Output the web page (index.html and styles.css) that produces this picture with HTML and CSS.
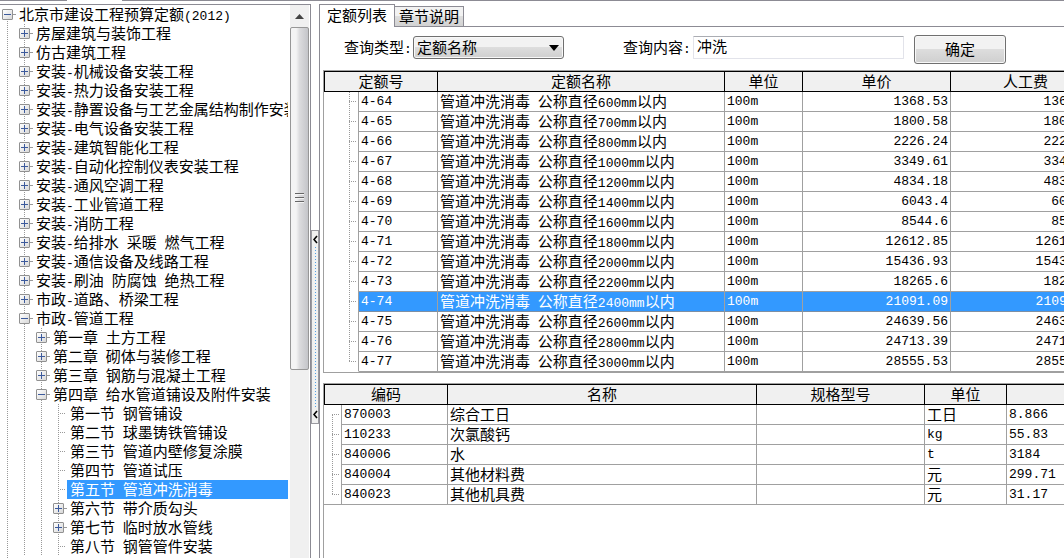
FILE: index.html
```html
<!DOCTYPE html>
<html lang="zh-CN">
<head>
<meta charset="utf-8">
<title>定额查询</title>
<link rel="stylesheet" href="styles.css">
</head>
<body>
<div class="topline"><span class="topline-gap"></span></div>
<div class="app">
  <nav class="side" aria-label="定额目录">
    <div class="tree-view">
      <ul class="tree root">
        <li><div class="node"><button class="toggle open" aria-label="折叠"></button><span class="label">北京市建设工程预算定额<span class="n">(2012)</span></span></div>
          <ul class="tree">
            <li><div class="node"><button class="toggle" aria-label="展开"></button><span class="label">房屋建筑与装饰工程</span></div></li>
            <li><div class="node"><button class="toggle" aria-label="展开"></button><span class="label">仿古建筑工程</span></div></li>
            <li><div class="node"><button class="toggle" aria-label="展开"></button><span class="label">安装<span class="n">-</span>机械设备安装工程</span></div></li>
            <li><div class="node"><button class="toggle" aria-label="展开"></button><span class="label">安装<span class="n">-</span>热力设备安装工程</span></div></li>
            <li><div class="node"><button class="toggle" aria-label="展开"></button><span class="label">安装<span class="n">-</span>静置设备与工艺金属结构制作安装</span></div></li>
            <li><div class="node"><button class="toggle" aria-label="展开"></button><span class="label">安装<span class="n">-</span>电气设备安装工程</span></div></li>
            <li><div class="node"><button class="toggle" aria-label="展开"></button><span class="label">安装<span class="n">-</span>建筑智能化工程</span></div></li>
            <li><div class="node"><button class="toggle" aria-label="展开"></button><span class="label">安装<span class="n">-</span>自动化控制仪表安装工程</span></div></li>
            <li><div class="node"><button class="toggle" aria-label="展开"></button><span class="label">安装<span class="n">-</span>通风空调工程</span></div></li>
            <li><div class="node"><button class="toggle" aria-label="展开"></button><span class="label">安装<span class="n">-</span>工业管道工程</span></div></li>
            <li><div class="node"><button class="toggle" aria-label="展开"></button><span class="label">安装<span class="n">-</span>消防工程</span></div></li>
            <li><div class="node"><button class="toggle" aria-label="展开"></button><span class="label">安装<span class="n">-</span>给排水<span class="n"> </span>采暖<span class="n"> </span>燃气工程</span></div></li>
            <li><div class="node"><button class="toggle" aria-label="展开"></button><span class="label">安装<span class="n">-</span>通信设备及线路工程</span></div></li>
            <li><div class="node"><button class="toggle" aria-label="展开"></button><span class="label">安装<span class="n">-</span>刷油<span class="n"> </span>防腐蚀<span class="n"> </span>绝热工程</span></div></li>
            <li><div class="node"><button class="toggle" aria-label="展开"></button><span class="label">市政<span class="n">-</span>道路、桥梁工程</span></div></li>
            <li><div class="node"><button class="toggle open" aria-label="折叠"></button><span class="label">市政<span class="n">-</span>管道工程</span></div>
              <ul class="tree">
                <li><div class="node"><button class="toggle" aria-label="展开"></button><span class="label">第一章<span class="n"> </span>土方工程</span></div></li>
                <li><div class="node"><button class="toggle" aria-label="展开"></button><span class="label">第二章<span class="n"> </span>砌体与装修工程</span></div></li>
                <li><div class="node"><button class="toggle" aria-label="展开"></button><span class="label">第三章<span class="n"> </span>钢筋与混凝土工程</span></div></li>
                <li><div class="node"><button class="toggle open" aria-label="折叠"></button><span class="label">第四章<span class="n"> </span>给水管道铺设及附件安装</span></div>
                  <ul class="tree">
                    <li><div class="node leaf"><span class="label">第一节<span class="n"> </span>钢管铺设</span></div></li>
                    <li><div class="node leaf"><span class="label">第二节<span class="n"> </span>球墨铸铁管铺设</span></div></li>
                    <li><div class="node leaf"><span class="label">第三节<span class="n"> </span>管道内壁修复涂膜</span></div></li>
                    <li><div class="node leaf"><span class="label">第四节<span class="n"> </span>管道试压</span></div></li>
                    <li><div class="node leaf selected"><span class="label">第五节<span class="n"> </span>管道冲洗消毒</span></div></li>
                    <li><div class="node"><button class="toggle" aria-label="展开"></button><span class="label">第六节<span class="n"> </span>带介质勾头</span></div></li>
                    <li><div class="node"><button class="toggle" aria-label="展开"></button><span class="label">第七节<span class="n"> </span>临时放水管线</span></div></li>
                    <li><div class="node leaf"><span class="label">第八节<span class="n"> </span>钢管管件安装</span></div></li>
                  </ul>
                </li>
              </ul>
            </li>
          </ul>
        </li>
      </ul>
    </div>
    <div class="scrollbar">
      <button class="scroll-up" aria-label="向上滚动"><svg width="9" height="5" viewBox="0 0 9 5"><path d="M0 5L4.500 0L9 5Z" fill="#444"/></svg></button>
      <div class="thumb"><span class="grip"></span></div>
    </div>
  </nav>

  <div class="splitter">
    <div class="splitter-bar">
      <svg width="5" height="9" viewBox="0 0 5 9"><path d="M4 1L1 4.500L4 8" fill="none" stroke="#000" stroke-width="1.600"/></svg>
      <span class="splitter-dots"></span>
      <svg width="5" height="9" viewBox="0 0 5 9"><path d="M4 1L1 4.500L4 8" fill="none" stroke="#000" stroke-width="1.600"/></svg>
    </div>
  </div>

  <main class="main">
    <div class="tabs" role="tablist">
      <button class="tab active" role="tab" aria-selected="true">定额列表</button>
      <button class="tab" role="tab" aria-selected="false">章节说明</button>
    </div>
    <form class="query">
      <label class="query-label" for="qtype">查询类型<span class="n">:</span></label>
      <div class="select-wrap">
        <select id="qtype" class="select"><option>定额名称</option></select>
        <svg class="select-arrow" width="10" height="6" viewBox="0 0 10 6"><path d="M0 0H10L5 6Z" fill="#000"/></svg>
      </div>
      <label class="query-label second" for="qtext">查询内容<span class="n">:</span></label>
      <input id="qtext" class="text" type="text" value="冲洗">
      <button class="ok" type="button">确定</button>
    </form>

    <div class="grid">
      <table class="quota">
        <colgroup><col class="q-guide"><col class="q-code"><col class="q-name"><col class="q-unit"><col class="q-price"><col class="q-labor"></colgroup>
        <thead><tr><th colspan="2">定额号</th><th>定额名称</th><th>单位</th><th>单价</th><th>人工费</th></tr></thead>
        <tbody>
          <tr><td class="guide"></td><td class="n">4-64</td><td>管道冲洗消毒<span class="n"> </span>公称直径<span class="n">600mm</span>以内</td><td class="n">100m</td><td class="n num">1368.53</td><td class="n num">1368.53</td></tr>
          <tr><td class="guide"></td><td class="n">4-65</td><td>管道冲洗消毒<span class="n"> </span>公称直径<span class="n">700mm</span>以内</td><td class="n">100m</td><td class="n num">1800.58</td><td class="n num">1800.58</td></tr>
          <tr><td class="guide"></td><td class="n">4-66</td><td>管道冲洗消毒<span class="n"> </span>公称直径<span class="n">800mm</span>以内</td><td class="n">100m</td><td class="n num">2226.24</td><td class="n num">2226.24</td></tr>
          <tr><td class="guide"></td><td class="n">4-67</td><td>管道冲洗消毒<span class="n"> </span>公称直径<span class="n">1000mm</span>以内</td><td class="n">100m</td><td class="n num">3349.61</td><td class="n num">3349.61</td></tr>
          <tr><td class="guide"></td><td class="n">4-68</td><td>管道冲洗消毒<span class="n"> </span>公称直径<span class="n">1200mm</span>以内</td><td class="n">100m</td><td class="n num">4834.18</td><td class="n num">4834.18</td></tr>
          <tr><td class="guide"></td><td class="n">4-69</td><td>管道冲洗消毒<span class="n"> </span>公称直径<span class="n">1400mm</span>以内</td><td class="n">100m</td><td class="n num">6043.4</td><td class="n num">6043.4</td></tr>
          <tr><td class="guide"></td><td class="n">4-70</td><td>管道冲洗消毒<span class="n"> </span>公称直径<span class="n">1600mm</span>以内</td><td class="n">100m</td><td class="n num">8544.6</td><td class="n num">8544.6</td></tr>
          <tr><td class="guide"></td><td class="n">4-71</td><td>管道冲洗消毒<span class="n"> </span>公称直径<span class="n">1800mm</span>以内</td><td class="n">100m</td><td class="n num">12612.85</td><td class="n num">12612.85</td></tr>
          <tr><td class="guide"></td><td class="n">4-72</td><td>管道冲洗消毒<span class="n"> </span>公称直径<span class="n">2000mm</span>以内</td><td class="n">100m</td><td class="n num">15436.93</td><td class="n num">15436.93</td></tr>
          <tr><td class="guide"></td><td class="n">4-73</td><td>管道冲洗消毒<span class="n"> </span>公称直径<span class="n">2200mm</span>以内</td><td class="n">100m</td><td class="n num">18265.6</td><td class="n num">18265.6</td></tr>
          <tr class="selected"><td class="guide"></td><td class="n">4-74</td><td>管道冲洗消毒<span class="n"> </span>公称直径<span class="n">2400mm</span>以内</td><td class="n">100m</td><td class="n num">21091.09</td><td class="n num">21091.09</td></tr>
          <tr><td class="guide"></td><td class="n">4-75</td><td>管道冲洗消毒<span class="n"> </span>公称直径<span class="n">2600mm</span>以内</td><td class="n">100m</td><td class="n num">24639.56</td><td class="n num">24639.56</td></tr>
          <tr><td class="guide"></td><td class="n">4-76</td><td>管道冲洗消毒<span class="n"> </span>公称直径<span class="n">2800mm</span>以内</td><td class="n">100m</td><td class="n num">24713.39</td><td class="n num">24713.39</td></tr>
          <tr><td class="guide"></td><td class="n">4-77</td><td>管道冲洗消毒<span class="n"> </span>公称直径<span class="n">3000mm</span>以内</td><td class="n">100m</td><td class="n num">28555.53</td><td class="n num">28555.53</td></tr>
        </tbody>
      </table>
    </div>

    <div class="grid grow">
      <table class="parts">
        <colgroup><col class="p-guide"><col class="p-code"><col class="p-name"><col class="p-spec"><col class="p-unit"><col class="p-amount"></colgroup>
        <thead><tr><th colspan="2">编码</th><th>名称</th><th>规格型号</th><th>单位</th><th></th></tr></thead>
        <tbody>
          <tr><td class="guide"></td><td class="n">870003</td><td>综合工日</td><td></td><td>工日</td><td class="n">8.866</td></tr>
          <tr><td class="guide"></td><td class="n">110233</td><td>次氯酸钙</td><td></td><td class="n">kg</td><td class="n">55.83</td></tr>
          <tr><td class="guide"></td><td class="n">840006</td><td>水</td><td></td><td class="n">t</td><td class="n">3184</td></tr>
          <tr><td class="guide"></td><td class="n">840004</td><td>其他材料费</td><td></td><td>元</td><td class="n">299.71</td></tr>
          <tr><td class="guide"></td><td class="n">840023</td><td>其他机具费</td><td></td><td>元</td><td class="n">31.17</td></tr>
        </tbody>
      </table>
    </div>
  </main>
</div>
</body>
</html>
```
FILE: styles.css
```css
* { box-sizing: border-box; }

body {
  margin: 0;
  height: 100vh;
  overflow: hidden;
  display: flex;
  flex-direction: column;
  background: #fff;
  color: #000;
  font: 15px/19px "Noto Sans CJK SC", sans-serif;
}

button, input, select {
  margin: 0;
  font: inherit;
  color: inherit;
}

/* Latin letters, digits and spaces take about half a CJK cell */
.n {
  font-family: "Liberation Mono", monospace;
  font-size: 13px;
  white-space: pre;
}
span.n { line-height: 0; }

.topline {
  flex: none;
  height: 4px;
  border-top: 1px solid #8c8b94;
  padding-left: 67px;
}
.topline-gap {
  display: block;
  width: 55px;
  height: 1px;
  margin-top: -1px;
  background: #fff;
}

.app {
  flex: 1;
  min-height: 0;
  display: flex;
}

/* Catalogue tree */
.side {
  flex: 0 0 311px;
  min-width: 0;
  display: flex;
  gap: 2px;
  border: solid #8c8b94;
  border-width: 1px 1px 0 0;
  padding-right: 1px;
}
.tree-view {
  flex: 1;
  min-width: 0;
  overflow: hidden;
}
.tree {
  list-style: none;
  margin: 0 0 0 17px;
  padding: 0;
  background: repeating-linear-gradient(#999 0 1px, transparent 1px 2px) 7px 0 / 1px 100% no-repeat;
}
.tree.root {
  margin: 0;
  min-height: 100%;
  background-position: 7px 12px;
}
.node {
  display: flex;
  align-items: center;
  height: 19px;
  padding-left: 2px;
  white-space: nowrap;
}
.toggle {
  flex: none;
  width: 11px;
  height: 11px;
  padding: 0;
  border: 1px solid #919191;
  border-radius: 1px;
  background:
    linear-gradient(#3c5a9c, #3c5a9c) center / 7px 1px no-repeat,
    linear-gradient(#3c5a9c, #3c5a9c) center / 1px 7px no-repeat,
    linear-gradient(135deg, #fff, #d8d8d8);
}
.toggle.open {
  background:
    linear-gradient(#3c5a9c, #3c5a9c) center / 7px 1px no-repeat,
    linear-gradient(135deg, #fff, #d8d8d8);
}
.node::before {
  content: "";
  order: 1;
  flex: none;
  width: 2px;
  border-top: 1px dotted #999;
}
.node .label {
  order: 2;
  flex: 1;
  min-width: 0;
  margin-left: 1px;
  padding: 0 0 2px 3px;
  line-height: 17px;
}
.node.leaf { padding-left: 8px; }
.node.leaf::before {
  width: 7px;
  height: 1px;
  border: 0;
  background: repeating-linear-gradient(90deg, transparent 0 1px, #999 1px 2px);
}
.node.selected .label {
  background: #3399ff;
  color: #fff;
}

.scrollbar {
  flex: 0 0 19px;
  display: flex;
  flex-direction: column;
  background: #f0f0f0;
}
.scroll-up {
  flex: none;
  display: flex;
  align-items: center;
  justify-content: center;
  height: 22px;
  padding: 0;
  border: 0;
  background: none;
}
.thumb {
  flex: 0 0 auto;
  height: 62%;
  display: flex;
  align-items: center;
  justify-content: center;
  border: 1px solid #979797;
  border-radius: 2px;
  background: linear-gradient(90deg, #f4f4f4 0 30%, #dcdcde 50%, #c4c5c9);
}
.grip {
  width: 9px;
  height: 10px;
  background: repeating-linear-gradient(#666 0 1px, #f4f4f4 1px 2px, transparent 2px 4px);
}

/* Splitter between the tree and the grids */
.splitter {
  flex: 0 0 8px;
  padding-top: 226px;
}
.splitter-bar {
  height: 194px;
  display: flex;
  flex-direction: column;
  align-items: center;
  gap: 3px;
  padding: 4px 0;
  border: 1px solid #9a9aa0;
  background: #f0f0f0;
}
.splitter-bar svg { flex: none; }
.splitter-dots {
  flex: 1;
  width: 1px;
  background: repeating-linear-gradient(#4f9fe8 0 1px, transparent 1px 3px);
}

/* Query panel */
.main {
  flex: 1;
  min-width: 0;
  display: flex;
  flex-direction: column;
  border-left: 1px solid #8c8b94;
}
.tabs {
  flex: none;
  display: flex;
  align-items: flex-end;
  height: 23px;
  border-bottom: 1px solid #8c8b94;
}
.tab {
  height: 20px;
  padding: 0 4px 2px;
  border: 1px solid #8c8b94;
  border-bottom: 0;
  border-left: 0;
  background: linear-gradient(#f2f2f2 0 50%, #dedede 50%, #d2d2d2);
  line-height: 17px;
}
.tab.active {
  height: 23px;
  margin-bottom: -1px;
  padding: 0 7px 4px;
  background: #fff;
}

.query {
  flex: none;
  display: flex;
  align-items: flex-start;
  padding: 8px 0 6px 24px;
}
.query-label {
  width: 69px;
  flex: none;
  padding-top: 2px;
  white-space: nowrap;
}
.query-label.second {
  width: 70px;
  margin-left: 59px;
}
.select-wrap {
  position: relative;
  flex: none;
  margin-top: 1px;
}
.select {
  appearance: none;
  display: block;
  width: 151px;
  height: 23px;
  padding: 0 20px 2px 3px;
  border: 1px solid #707070;
  border-radius: 3px;
  background: linear-gradient(#f2f2f2 0 48%, #dddddd 50%, #cfcfcf);
  box-shadow: inset 0 0 0 1px #f8f8f8;
  line-height: 19px;
}
.select-arrow {
  position: absolute;
  right: 5px;
  top: 9px;
  pointer-events: none;
}
.text {
  flex: none;
  width: 211px;
  height: 23px;
  margin-top: 1px;
  padding: 0 3px 4px;
  border: 1px solid #e2e3ea;
  border-top-color: #abadb3;
  border-radius: 1px;
  background: #fff;
}
.ok {
  flex: none;
  width: 92px;
  height: 29px;
  margin-left: 10px;
  padding: 0 0 2px;
  border: 1px solid #707070;
  border-radius: 3px;
  background: linear-gradient(#f2f2f2 0 48%, #dddddd 50%, #cfcfcf);
  box-shadow: inset 0 0 0 1px #f8f8f8;
}

/* Data grids */
.grid {
  flex: none;
  overflow: hidden;
  margin-left: 3px;
  border: 1px solid #a0a0a0;
  border-right: 0;
}
.grid.grow {
  flex: 1;
  margin-top: 10px;
  border-bottom: 0;
}
table {
  table-layout: fixed;
  border-collapse: separate;
  border-spacing: 0;
}
.quota { width: 777px; }
.parts { width: 833px; }
.q-guide { width: 35px; }
.q-code { width: 79px; }
.q-name { width: 287px; }
.q-unit { width: 78px; }
.q-price { width: 148px; }
.q-labor { width: 150px; }
.p-guide { width: 18px; }
.p-code { width: 106px; }
.p-name { width: 309px; }
.p-spec { width: 168px; }
.p-unit { width: 82px; }
.p-amount { width: 150px; }

th {
  height: 21px;
  padding: 0 0 2px;
  border: solid #000;
  border-width: 1px 1px 1px 0;
  background: #f0f0f0;
  font-weight: normal;
  line-height: 17px;
}
th:first-child { border-left-width: 1px; }
td {
  height: 20px;
  padding: 0 2px 2px;
  border: solid #a0a0a0;
  border-width: 0 1px 1px 0;
  line-height: 17px;
  white-space: nowrap;
}
td.n { padding-bottom: 0; }
td.num { text-align: right; }

td.guide {
  border-bottom: 0;
  background:
    repeating-linear-gradient(#999 0 1px, transparent 1px 2px) 25px 0 / 1px 100% no-repeat,
    repeating-linear-gradient(90deg, #999 0 1px, transparent 1px 2px) 25px 9px / 8px 1px no-repeat;
}
tr:last-child td.guide {
  border-bottom: 1px solid #a0a0a0;
  background-size: 1px 10px, 8px 1px;
}
.quota tr:last-child td.guide { border-bottom-color: transparent; }
.parts td.guide { background-position: 8px 0, 8px 9px; }
.parts tr:first-child td.guide { background-position: 8px 10px, 8px 9px; }

tr.selected td:not(.guide) {
  background: #3399ff;
  color: #fff;
  border-bottom-color: #7d8fa3;
}
```
